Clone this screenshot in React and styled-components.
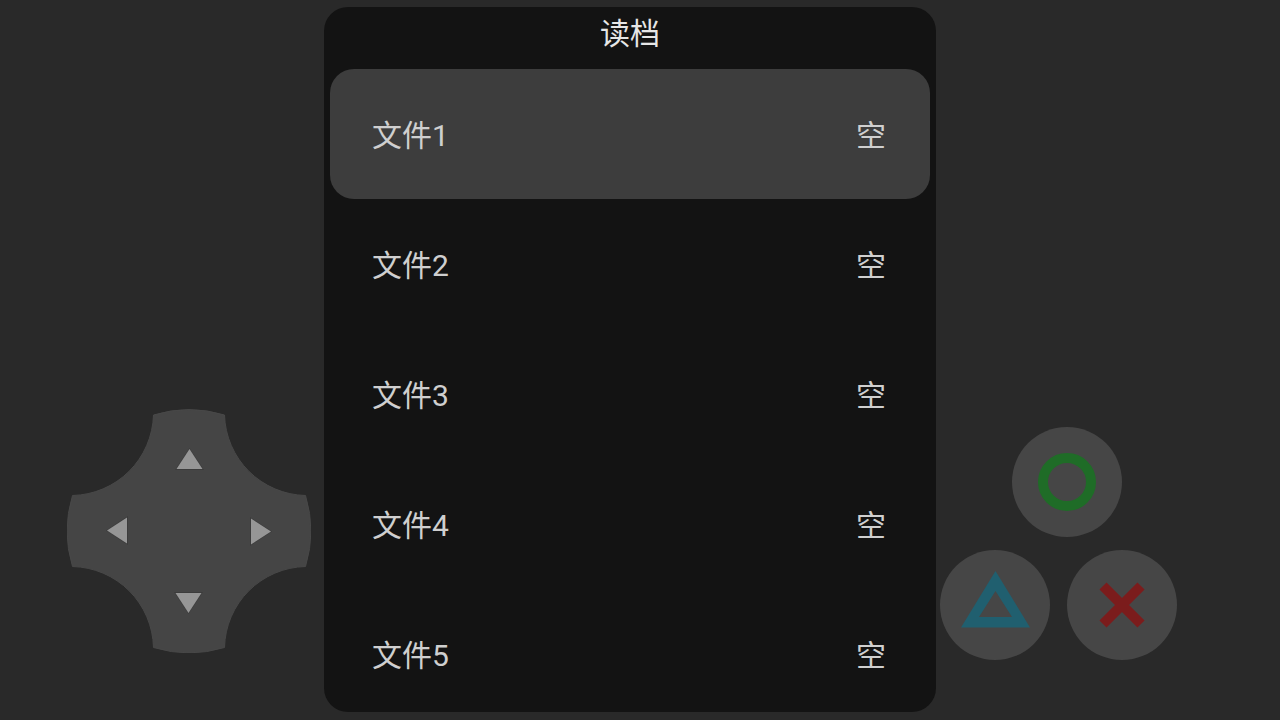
import React, { useState } from "react";
import styled, { createGlobalStyle } from "styled-components";

const files = [
	{ name: "文件1", status: "空" },
	{ name: "文件2", status: "空" },
	{ name: "文件3", status: "空" },
	{ name: "文件4", status: "空" },
	{ name: "文件5", status: "空" },
];

const directions = [
	{ label: "上", area: "1 / 2", angle: 0 },
	{ label: "左", area: "2 / 1", angle: 270 },
	{ label: "右", area: "2 / 3", angle: 90 },
	{ label: "下", area: "3 / 2", angle: 180 },
];

export default function App() {
	return (
		<>
			<GlobalStyle />
			<Screen>
				<LeftSide>
					<DPad />
				</LeftSide>
				<LoadMenu />
				<RightSide>
					<FaceButtons />
				</RightSide>
			</Screen>
		</>
	);
}

function LoadMenu() {
	const [selected, setSelected] = useState(0);
	return (
		<Panel>
			<Title>读档</Title>
			<List>
				{files.map((file, index) => (
					<li key={file.name}>
						<FileButton
							type="button"
							$selected={index === selected}
							onClick={() => setSelected(index)}
						>
							<span>{file.name}</span>
							<span>{file.status}</span>
						</FileButton>
					</li>
				))}
			</List>
		</Panel>
	);
}

function DPad() {
	return (
		<Pad>
			<PadShape viewBox="0 0 244 244" aria-hidden="true">
				<path
					d="M86.5 6A121.500 121.500 0 0 1 157.5 6A83 83 0 0 0 238.500 86.5A121.5 121.5 0 0 1 238.5 157.5A83 83 0 0 0 157.5 238.5A121.5 121.5 0 0 1 86.5 238.5A83 83 0 0 0 5.5 157.5A121.5 121.5 0 0 1 5.5 86.5A83 83 0 0 0 86.5 6Z"
					fill="#454545"
					stroke="#484848"
				/>
			</PadShape>
			{directions.map(({ label, area, angle }) => (
				<PadButton key={label} type="button" aria-label={label} $area={area}>
					<Arrow viewBox="0 0 30 30" $angle={angle}>
						<path d="M15.5 4L30 26H1Z" fill="#3c3c3c" />
						<path d="M15.5 5L28.5 25H2.5Z" fill="#969696" />
					</Arrow>
				</PadButton>
			))}
		</Pad>
	);
}

function FaceButtons() {
	return (
		<Faces>
			<FaceRow $shift>
				<FaceButton type="button" aria-label="圆圈">
					<svg viewBox="0 0 110 110">
						<circle cx="55" cy="55" r="24" stroke="#1f6c27" strokeWidth="10" />
					</svg>
				</FaceButton>
			</FaceRow>
			<FaceRow>
				<FaceButton type="button" aria-label="三角">
					<svg viewBox="0 0 110 110">
						<path
							d="M55.5 21L90 77.5H21ZM55.5 41L39 67H72Z"
							fill="#205f6f"
							fillRule="evenodd"
						/>
					</svg>
				</FaceButton>
				<FaceButton type="button" aria-label="叉">
					<svg viewBox="0 0 110 110">
						<path
							d="M36 36L74 74M74 36L36 74"
							stroke="#7b1c1c"
							strokeWidth="10"
						/>
					</svg>
				</FaceButton>
			</FaceRow>
		</Faces>
	);
}

const GlobalStyle = createGlobalStyle`
	* {
		box-sizing: border-box;
	}
	body {
		margin: 0;
		background: #292929;
		font-family: Roboto, "Noto Sans CJK SC", sans-serif;
	}
	button {
		border: 0;
		padding: 0;
		background: none;
		font: inherit;
		color: inherit;
		cursor: pointer;
	}
	svg {
		display: block;
		fill: none;
	}
`;

const Screen = styled.main`
	display: grid;
	grid-template-columns: 324fr minmax(0, 612px) 344fr;
	height: 100vh;
	overflow: hidden;
`;

const Side = styled.div`
	display: flex;
	align-items: flex-end;
`;

const LeftSide = styled(Side)`
	justify-content: flex-end;
	padding: 0 13px 67px 0;
`;

const RightSide = styled(Side)`
	padding: 0 0 60px 4px;
`;

const Panel = styled.section`
	display: flex;
	flex-direction: column;
	min-height: 0;
	margin: 7px 0 8px;
	padding: 0 6px;
	border-radius: 24px;
	background: #131313;
	overflow: hidden;
`;

const Title = styled.h1`
	margin: 0;
	padding: 1px 0 9px;
	color: #e6e6e6;
	font-size: 30px;
	font-weight: 400;
	line-height: 52px;
	text-align: center;
`;

const List = styled.ul`
	flex: 1;
	min-height: 0;
	margin: 0;
	padding: 0;
	list-style: none;
	overflow: hidden;
`;

const FileButton = styled.button`
	display: flex;
	align-items: center;
	justify-content: space-between;
	width: 100%;
	height: 130px;
	padding: 4px 44px 0 42px;
	border-radius: 24px;
	color: #cfcfcf;
	font-size: 30px;
	line-height: 40px;
	${({ $selected }) => ($selected ? `background: #3d3d3d;` : ``)}
`;

const Pad = styled.div`
	display: grid;
	flex: none;
	grid-template: repeat(3, 72px) / repeat(3, 72px);
	padding: 14px;
`;

const PadShape = styled.svg`
	grid-area: 1 / 1 / 4 / 4;
	width: 244px;
	height: 244px;
	margin: -14px;
`;

const PadButton = styled.button`
	display: grid;
	grid-area: ${({ $area }) => $area};
	place-items: center;
`;

const Arrow = styled.svg`
	width: 30px;
	height: 30px;
	transform: rotate(${({ $angle }) => $angle}deg);
`;

const Faces = styled.div`
	display: flex;
	flex: none;
	flex-direction: column;
	gap: 13px;
`;

const FaceRow = styled.div`
	display: flex;
	gap: 17px;
	${({ $shift }) => ($shift ? `padding-left: 72px;` : ``)}
`;

const FaceButton = styled.button`
	width: 110px;
	height: 110px;
	border-radius: 50%;
	background: #464646;
`;
